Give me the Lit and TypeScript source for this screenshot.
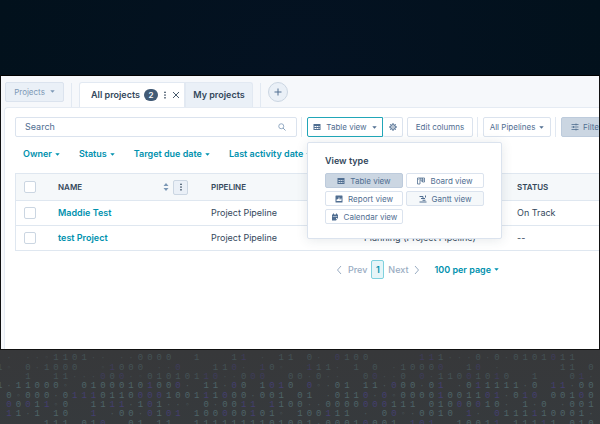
import { LitElement, html, css, svg } from "lit";
import { customElement, property } from "lit/decorators.js";

const ICONS = {
  table: svg`<path fill="currentColor" fill-rule="evenodd" d="M1 2h14v12H1zM3 6v2h3V6zM7 6v2h3V6zM11 6v2h2V6zM3 10v2h3v-2zM7 10v2h3v-2zM11 10v2h2v-2z"/>`,
  board: svg`<path fill="none" stroke="currentColor" stroke-width="1.6" d="M1 2h14v8h-4V2M1 2v12h5V2M3 5h1M13 5v2M8 2v6h3"/>`,
  report: svg`<path fill="currentColor" fill-rule="evenodd" d="M2 1h12q1 0 1 1v12q0 1-1 1H2q-1 0-1-1V2q0-1 1-1zM3 9v3h10V7h-2v2H9V5H7v3H5v1z"/>`,
  gantt: svg`<path fill="none" stroke="currentColor" stroke-width="2" d="M1 3h7M4 7h8M8 3v4M1 14h14M7 10.500h6M13 1v4"/>`,
  calendar: svg`<path fill="currentColor" fill-rule="evenodd" d="M2 3h2V1h2v2h4V1h2v2h2v7l-4 5H2zM3.500 6.500v1h9v-1zM10 10v3l3-3z"/>`,
  gear: svg`<circle cx="8" cy="8" r="4.500" fill="none" stroke="currentColor" stroke-width="2"/><circle cx="8" cy="8" r="1.500" fill="currentColor"/><path stroke="currentColor" stroke-width="2.600" d="M8 .5v3M8 12.500v3M.5 8h3M12.500 8h3M2.700 2.700l2 2M11.300 11.300l2 2M13.300 2.700l-2 2M4.700 11.300l-2 2"/>`,
  search: svg`<circle cx="6.500" cy="6.500" r="5" fill="none" stroke="currentColor" stroke-width="1.600"/><path stroke="currentColor" stroke-width="1.800" d="M10 10l5 5"/>`,
  filter: svg`<path stroke="currentColor" stroke-width="1.600" d="M1 3h14M1 8h14M1 13h14M10 1v4M5 6v4M10 11v4"/>`,
  close: svg`<path stroke="currentColor" stroke-width="1.800" d="M2 2l12 12M14 2L2 14"/>`,
  plus: svg`<path stroke="currentColor" stroke-width="2" d="M8 1v14M1 8h14"/>`,
  dots: svg`<g fill="currentColor"><circle cx="8" cy="2.500" r="1.700"/><circle cx="8" cy="8" r="1.700"/><circle cx="8" cy="13.500" r="1.700"/></g>`,
  caret: svg`<path fill="currentColor" d="M1 4h14L8 12z"/>`,
  sort: svg`<path fill="currentColor" d="M8 0l5 6H3zM8 16l5-6H3z"/>`,
  left: svg`<path fill="none" stroke="currentColor" stroke-width="2" d="M12 0L5 8l7 8"/>`,
  right: svg`<path fill="none" stroke="currentColor" stroke-width="2" d="M4 0l7 8-7 8"/>`,
};

@customElement("ui-icon")
class UiIcon extends LitElement {
  @property() name: keyof typeof ICONS = "table";
  static styles = css`
    :host { display: inline-flex; flex: none; width: 8px; height: 8px; }
    svg { width: 100%; height: 100%; }
  `;
  render() {
    return html`<svg viewBox="0 0 16 16" aria-hidden="true">${ICONS[this.name]}</svg>`;
  }
}

/* 0 and 1 are teal digits, o and i violet ones, . and c small dots; each row is two halves of 32 */
const BITS = [
  [" . ..c1101.. ..0000  1   1i . 11", " 0. o100     ii1...0.0.0101o11  "],
  ["1c 0.1000  ci000 ..o   11o. i0c ", " i11. 1 0 .1000o  1o .      11 0"],
  ["   1  11...o0o.c010101io..0oo  0", "0.0..  0o..0 o.110o10i0  1   0i."],
  ["1.11000c 0100010i00o. 11.o0 1oi0", " oc.01 11.o00.0i .0i1111.0 ii.00"],
  [" 0c000.0iii0110ooo1001i1o00.001 ", "01 .011o.oc0000i0011oi.0io 001o0"],
  [" o0o1ic0  11ii.1o1..c 0.00ii i10", "0..0000ooo111 010o0o10. 1.0 .001"],
  [" i1.1 10  i .00.o1oi 100o00i01c ", "100i11 . 0oc.0010 i. o111i10001."],
  ["     111 01o  01 11  11111111010", "01.0001o001 ioi  1001i 111i1 010"],
];

@customElement("binary-rain")
class BinaryRain extends LitElement {
  static styles = css`
    :host { display: block; overflow: hidden; background: linear-gradient(#37383a, #363a3d); }
    .grid {
      display: grid; grid-template-columns: repeat(65, 1fr); grid-template-rows: repeat(8, 1fr);
      height: 75px; margin: 4px -5px 0; align-items: center; justify-items: center;
      font: 9px/9px "Liberation Mono", monospace; color: #4e6468;
    }
    .violet { color: #443f70; }
    .dot { color: #4a5559; }
    .faint { opacity: 0.6; }
  `;
  render() {
    return html`<div class="grid" aria-hidden="true">
      ${BITS.map((halves, r) => [...halves.join("").padEnd(65)].map((c) => {
        const tone = "oi".includes(c) ? "violet" : ".c".includes(c) ? "dot" : "";
        const glyph = ({ o: "0", i: "1", ".": "·", c: "◦" } as Record<string, string>)[c] ?? c;
        return html`<span class="${tone} ${r < 3 ? "faint" : ""}">${glyph}</span>`;
      }))}
    </div>`;
  }
}

const ROWS = [
  { name: "Maddie Test", pipeline: "Project Pipeline", stage: "", status: "On Track" },
  { name: "test Project", pipeline: "Project Pipeline", stage: "Planning (Project Pipeline)", status: "--" },
];
const VIEWS = [
  ["table", "Table view", "selected"],
  ["board", "Board view", ""],
  ["report", "Report view", ""],
  ["gantt", "Gantt view", "hover"],
  ["calendar", "Calendar view", ""],
];

@customElement("app-root")
class AppRoot extends LitElement {
  static styles = css`
    :host {
      display: flex; flex-direction: column; min-height: 100vh; background: #02111f;
      font: 9px/12px Inter, sans-serif; color: #33475b;
    }
    * { box-sizing: border-box; }
    button, input { font: inherit; color: inherit; margin: 0; }
    button { background: none; border: 0; padding: 0; display: inline-flex; align-items: center; white-space: nowrap; flex: none; }
    a { color: #0091ae; text-decoration: none; font-weight: 600; }
    .banner { height: 75px; background: radial-gradient(circle at 50% 100%, #041222, #02111c); }
    .window { border: 1px solid #111; border-top-color: #000; overflow: hidden; background: #f6f8fb; min-height: 275px; display: flex; flex-direction: column; }
    .tabs { display: flex; align-items: center; padding: 0 4px; height: 31px; }
    .box { height: 20px; border: 1px solid #dbe3ee; border-radius: 2px; background: #fff; color: #506e91; font-size: 8px; justify-content: center; }
    .projects { width: 59px; gap: 5px; background: #eaf0f7; color: #7c98b6; }
    .rule { width: 1px; height: 20px; background: #e2e9f2; flex: none; }
    .tabs .rule { height: 24px; margin: 0 7px; align-self: flex-end; }
    .tab { display: flex; align-items: center; align-self: flex-end; height: 25px; border: 1px solid #e2e9f2; border-bottom: 0; font-weight: 600; white-space: nowrap; }
    .tab.active { width: 106px; padding-left: 11px; background: #fff; border-radius: 3px 0 0 0; }
    .tab.other { width: 68px; justify-content: center; background: #eaf0f7; border-radius: 0 3px 0 0; }
    .count { margin: 0 3px 0 4px; width: 14px; height: 12px; border-radius: 6px; background: #425b76; color: #fff; font-size: 8px; text-align: center; }
    .tab button { margin-right: 3px; }
    .add { width: 20px; height: 20px; border: 1px solid #cbd6e2; border-radius: 50%; background: #eaf0f7; color: #506e91; justify-content: center; }
    .panel { flex: 1; margin-left: 3px; border: 1px solid #e5ebf3; border-width: 1px 0 0 1px; border-radius: 4px 0 0 0; background: #fff; padding: 9px 0 0 10px; }
    .toolbar { display: flex; align-items: center; }
    .toolbar .rule { margin: 0 5px 0 4px; }
    .search { flex: 1 1 282px; min-width: 100px; height: 20px; display: flex; align-items: center; padding: 0 10px 0 9px; border: 1px solid #dbe3ee; border-radius: 2px; color: #7c98b6; }
    .search input { flex: 1; min-width: 0; border: 0; outline: 0; padding: 0; background: none; }
    .search input::placeholder { color: #506e91; opacity: 1; }
    .picker { position: relative; display: flex; flex: none; }
    .view { width: 76px; gap: 5px; border-color: #21a6b8; border-radius: 2px 0 0 2px; }
    .gear { width: 20px; border-left: 0; }
    .edit { width: 66px; margin-left: 4px; }
    .pipes { width: 68px; gap: 4px; }
    .filters { width: 64px; gap: 4px; padding-left: 9px; justify-content: flex-start; background: #cbd6e2; border-color: #bdcbdc; }
    .clip { display: flex; width: 38px; overflow: hidden; flex: none; }
    .view ui-icon:last-child, .projects ui-icon, .pipes ui-icon, .quick ui-icon, .per ui-icon { width: 5px; height: 5px; }
    .popover {
      position: absolute; z-index: 1; top: 25px; left: 0; width: 195px; padding: 12px 17px 14px; background: #fff;
      border: 1px solid #dbe3ee; border-radius: 2px; box-shadow: 0 1px 12px rgba(45, 62, 80, 0.12);
    }
    h2 { margin: 0 0 6px; font: 600 9px/12px Inter, sans-serif; }
    .options { display: grid; grid-template-columns: 1fr 1fr; gap: 3px; }
    .options .box { height: 15px; gap: 5px; }
    .options .selected { background: #cbd6e2; border-color: #bdcbdc; }
    .options .hover { background: #f5f8fa; }
    .quick { display: flex; gap: 19px; padding: 11px 8px 13px; }
    .quick a, .per { display: inline-flex; align-items: center; gap: 3px; white-space: nowrap; }
    table { width: 100%; table-layout: fixed; border-collapse: separate; border-spacing: 0; border: 1px solid #dfe7f0; border-right: 0; }
    .c1 { width: 42px; }
    .c2, .c3, .c4 { width: 153px; }
    th, td { padding: 0; text-align: left; white-space: nowrap; }
    th { height: 26px; background: #f5f8fa; font-weight: 600; font-size: 8px; }
    td { height: 25px; border-top: 1px solid #dfe7f0; }
    .tick { display: block; appearance: none; width: 12px; height: 12px; margin-left: 8px; border: 1px solid #cbd6e2; border-radius: 2px; background: #fff; }
    .head { display: flex; align-items: center; gap: 3px; padding-right: 23px; }
    .head span { flex: 1; }
    .head ui-icon { color: #7c98b6; }
    .menu { width: 15px; height: 15px; border: 1px solid #cbd6e2; border-radius: 2px; background: #eaf0f7; justify-content: center; }
    .head .menu ui-icon { color: #33475b; }
    .pager { display: flex; align-items: center; justify-content: center; padding: 9px 0 0 220px; color: #99acc2; font-weight: 500; }
    .pager button { gap: 5px; }
    .page { width: 13px; height: 19px; margin: 0 4px; display: flex; align-items: center; justify-content: center; border: 1px solid #7fd1de; border-radius: 2px; background: #e5f5f8; }
    .per { margin-left: 13px; }
    binary-rain { flex: 1; }
  `;

  render() {
    return html`
      <div class="banner"></div>
      <main class="window">
        <nav class="tabs">
          <button class="box projects">Projects <ui-icon name="caret"></ui-icon></button>
          <span class="rule"></span>
          <div class="tab active">All projects <span class="count">2</span>
            <button aria-label="Tab options"><ui-icon name="dots"></ui-icon></button>
            <button aria-label="Close tab"><ui-icon name="close"></ui-icon></button>
          </div>
          <button class="tab other">My projects</button>
          <span class="rule"></span>
          <button class="add" aria-label="Add view"><ui-icon name="plus"></ui-icon></button>
        </nav>
        <section class="panel">
          <div class="toolbar">
            <label class="search"><input type="text" placeholder="Search" aria-label="Search" /><ui-icon name="search"></ui-icon></label>
            <span class="rule"></span>
            <div class="picker">
              <button class="box view" aria-expanded="true"><ui-icon name="table"></ui-icon>Table view<ui-icon name="caret"></ui-icon></button>
              <button class="box gear" aria-label="Settings"><ui-icon name="gear"></ui-icon></button>
              <div class="popover">
                <h2>View type</h2>
                <div class="options">
                  ${VIEWS.map(([icon, label, state]) => html`<button class="box ${state}"><ui-icon name=${icon}></ui-icon>${label}</button>`)}
                </div>
              </div>
            </div>
            <button class="box edit">Edit columns</button>
            <span class="rule"></span>
            <button class="box pipes">All Pipelines<ui-icon name="caret"></ui-icon></button>
            <span class="rule"></span>
            <div class="clip"><button class="box filters"><ui-icon name="filter"></ui-icon>Filters</button></div>
          </div>
          <div class="quick">
            ${["Owner", "Status", "Target due date", "Last activity date"].map((t) => html`<a href="#">${t}<ui-icon name="caret"></ui-icon></a>`)}
          </div>
          <table>
            <colgroup><col class="c1" /><col class="c2" /><col class="c3" /><col class="c4" /><col /></colgroup>
            <thead><tr>
              <th><input class="tick" type="checkbox" aria-label="Select all" /></th>
              <th><div class="head"><span>NAME</span><ui-icon name="sort"></ui-icon><button class="menu" aria-label="Column options"><ui-icon name="dots"></ui-icon></button></div></th>
              <th>PIPELINE</th><th></th><th>STATUS</th>
            </tr></thead>
            <tbody>
              ${ROWS.map((r) => html`<tr>
                <td><input class="tick" type="checkbox" aria-label="Select ${r.name}" /></td>
                <td><a href="#">${r.name}</a></td><td>${r.pipeline}</td><td>${r.stage}</td><td>${r.status}</td>
              </tr>`)}
            </tbody>
          </table>
          <div class="pager">
            <button><ui-icon name="left"></ui-icon>Prev</button>
            <a class="page" href="#">1</a>
            <button>Next<ui-icon name="right"></ui-icon></button>
            <a class="per" href="#">100 per page<ui-icon name="caret"></ui-icon></a>
          </div>
        </section>
      </main>
      <binary-rain></binary-rain>
    `;
  }
}
